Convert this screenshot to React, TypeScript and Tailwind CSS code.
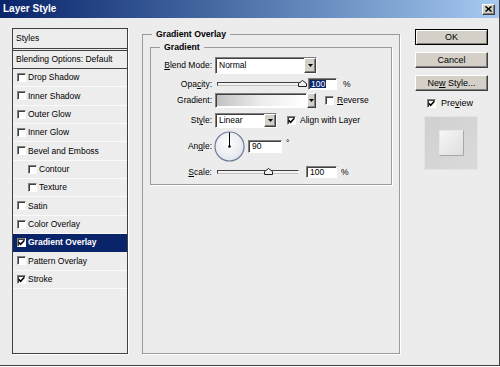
import React from 'react';

const sunken =
  'border border-t-[#808080] border-l-[#808080] border-r-white border-b-white bg-white shadow-[inset_1px_1px_0_#404040]';
const raised =
  'border border-t-white border-l-white border-r-[#404040] border-b-[#404040] bg-[#d4d0c8] shadow-[inset_-1px_-1px_0_#808080]';

function Check({ on, className = '' }: { on?: boolean; className?: string }) {
  return (
    <span className={`flex h-[9px] w-[9px] shrink-0 items-center justify-center ${sunken} ${className}`}>
      {on && (
        <svg width="7" height="7" viewBox="0 0 7 7">
          <path d="M0.6 3.2 L2.6 5.3 L6.4 1.2" fill="none" stroke="#000" strokeWidth="1.6" />
        </svg>
      )}
    </span>
  );
}

function Arrow({ className = '' }: { className?: string }) {
  return (
    <span className={`flex h-full shrink-0 items-center justify-center ${raised} ${className}`}>
      <svg width="5" height="3" viewBox="0 0 5 3">
        <path d="M0 0h5L2.5 3z" fill="#000" />
      </svg>
    </span>
  );
}

function Thumb({ className = '' }: { className?: string }) {
  return (
    <svg width="9" height="7" viewBox="0 0 9 7" className={`absolute top-[2px] ${className}`}>
      <path d="M0.5 6.5V3.5L4.5 0.5L8.5 3.5V6.5Z" fill="#f2f2f2" stroke="#202020" />
    </svg>
  );
}

function Btn({ children, primary, className = '' }: { children: React.ReactNode; primary?: boolean; className?: string }) {
  const edge = primary
    ? 'border border-black bg-[#d4d0c8] shadow-[inset_1px_1px_0_#fff,inset_-1px_-1px_0_#808080]'
    : raised;
  return (
    <div className={`flex h-[16px] w-[73px] items-center justify-center text-[9px] ${edge} ${className}`}>
      {children}
    </div>
  );
}

const styles: [string, boolean, boolean][] = [
  ['Drop Shadow', false, false],
  ['Inner Shadow', false, false],
  ['Outer Glow', false, false],
  ['Inner Glow', false, false],
  ['Bevel and Emboss', false, false],
  ['Contour', false, true],
  ['Texture', false, true],
  ['Satin', false, false],
  ['Color Overlay', false, false],
  ['Gradient Overlay', true, false],
  ['Pattern Overlay', false, false],
  ['Stroke', true, false],
];

function StyleList() {
  return (
    <div className="mt-[10px] flex h-[326px] w-[116px] shrink-0 flex-col border border-[#404040] bg-[#ededed] shadow-[1px_1px_0_#fff]">
      <div className="flex h-[20px] shrink-0 items-center border-b border-[#404040] pl-[3px]">Styles</div>
      <div className="h-[1px] shrink-0" />
      <div className="flex h-[19px] shrink-0 items-center border-y border-[#404040] pl-[3px]">
        Blending Options: Default
      </div>
      {styles.map(([name, on, indent]) => {
        const sel = name === 'Gradient Overlay';
        return (
          <div
            key={name}
            className={`flex h-[18.33px] shrink-0 items-center gap-[2px] border-b ${
              sel ? 'border-[#0a246a] bg-[#0a246a] font-bold text-white' : 'border-[#fafafa]'
            } ${indent ? 'pl-[15px]' : 'pl-[4px]'}`}
          >
            <Check on={on} />
            <span>{name}</span>
          </div>
        );
      })}
    </div>
  );
}

function Label({ children }: { children: React.ReactNode }) {
  return <span className="w-[61px] shrink-0 text-right">{children}</span>;
}

function Options() {
  return (
    <fieldset className="ml-[14px] mt-[11px] h-[325px] w-[258px] shrink-0 border border-[#9a9a9a] shadow-[1px_1px_0_#fff]">
      <legend className="ml-[9px] px-[4px] text-[8.7px] font-bold leading-[11px]">Gradient Overlay</legend>
      <fieldset className="ml-[7px] mt-[1px] w-[242px] border border-[#9a9a9a] pb-[6px] shadow-[1px_1px_0_#fff]">
        <legend className="ml-[9px] px-[4px] text-[8.7px] font-bold leading-[12px]">Gradient</legend>

        <div className="mt-[4px] flex h-[17px] items-center">
          <Label>
            <span className="underline">B</span>lend Mode:
          </Label>
          <div className={`ml-[3px] flex h-full w-[102px] items-center ${sunken}`}>
            <span className="flex-1 pl-[3px]">Normal</span>
            <Arrow className="w-[12px]" />
          </div>
        </div>

        <div className="mt-[4px] flex h-[12px] items-center">
          <Label>
            Opa<span className="underline">c</span>ity:
          </Label>
          <div className="relative ml-[5px] flex h-full w-[86px] items-center">
            <div className="h-[4px] w-full border border-t-[#404040] border-l-[#404040] border-r-white border-b-[#c0c0c0] bg-[#f4f4f4]" />
            <Thumb className="left-[81px]" />
          </div>
          <div className={`ml-[5px] flex h-full w-[29px] items-center pl-[1px] ${sunken}`}>
            <span className="bg-[#0a246a] px-[1px] text-white">100</span>
          </div>
          <span className="ml-[6px]">%</span>
        </div>

        <div className="mt-[3px] flex h-[15px] items-center">
          <Label>Gradient:</Label>
          <div className={`ml-[3px] h-full w-[92px] p-[1px] ${sunken}`}>
            <div className="h-full w-full bg-linear-to-r from-[#c2c2c2] via-[#ececec] to-white" />
          </div>
          <Arrow className="w-[9px]" />
          <Check className="ml-[9px]" />
          <span className="ml-[3px]">
            <span className="underline">R</span>everse
          </span>
        </div>

        <div className="mt-[5px] flex h-[15px] items-center">
          <Label>
            St<span className="underline">y</span>le:
          </Label>
          <div className={`ml-[3px] flex h-full w-[62px] items-center ${sunken}`}>
            <span className="flex-1 pl-[3px]">Linear</span>
            <Arrow className="w-[12px]" />
          </div>
          <Check on className="ml-[10px]" />
          <span className="ml-[4px]">Align with Layer</span>
        </div>

        <div className="mt-[3px] flex h-[31px] items-center">
          <Label>
            An<span className="underline">g</span>le:
          </Label>
          <svg width="31" height="31" viewBox="0 0 31 31" className="ml-[2px] shrink-0">
            <defs>
              <radialGradient id="dial" cx="0.45" cy="0.4" r="0.6">
                <stop offset="0" stopColor="#ffffff" />
                <stop offset="1" stopColor="#e2e6ee" />
              </radialGradient>
            </defs>
            <circle cx="15.5" cy="15.5" r="14.5" fill="url(#dial)" stroke="#6f7c96" strokeWidth="1.2" />
            <line x1="15.5" y1="15.5" x2="15.5" y2="1.5" stroke="#000" strokeWidth="1" />
            <circle cx="15.5" cy="15.5" r="1.3" fill="#000" />
          </svg>
          <div className={`ml-[3px] flex h-[13px] w-[34px] items-center pl-[3px] ${sunken}`}>90</div>
          <span className="ml-[4px] self-start mt-[8px]">°</span>
        </div>

        <div className="mt-[4px] flex h-[12px] items-center">
          <Label>
            <span className="underline">S</span>cale:
          </Label>
          <div className="relative ml-[5px] flex h-full w-[82px] items-center">
            <div className="h-[4px] w-full border border-t-[#404040] border-l-[#404040] border-r-white border-b-[#c0c0c0] bg-[#f4f4f4]" />
            <Thumb className="left-[47px]" />
          </div>
          <div className={`ml-[7px] flex h-full w-[31px] items-center pl-[3px] ${sunken}`}>100</div>
          <span className="ml-[4px]">%</span>
        </div>
      </fieldset>
    </fieldset>
  );
}

function Actions() {
  return (
    <div className="ml-[15px] mt-[11px] flex w-[73px] shrink-0 flex-col">
      <Btn primary>OK</Btn>
      <Btn className="mt-[7px]">Cancel</Btn>
      <Btn className="mt-[7px]">
        <span>
          Ne<span className="underline">w</span> Style...
        </span>
      </Btn>
      <div className="ml-[12px] mt-[7px] flex h-[10px] items-center gap-[5px] text-[9px]">
        <Check on />
        <span>
          Pre<span className="underline">v</span>iew
        </span>
      </div>
      <div className="ml-[9px] mt-[8px] flex h-[54px] w-[54px] items-center justify-center border border-[#e4e4e4] bg-linear-to-br from-[#d0d0d0] to-[#dadada]">
        <div className="h-[26px] w-[25px] border border-t-[#e8e8e8] border-l-[#e8e8e8] border-r-[#a8a8a8] border-b-[#a8a8a8] bg-linear-to-br from-[#f6f6f6] to-[#dedede]" />
      </div>
    </div>
  );
}

export default function App() {
  return (
    <div className="h-[366px] w-[500px] border-b border-r border-[#404040] bg-[#ececec] font-['Liberation_Sans',Arial,sans-serif] text-[8.5px] leading-none text-black">
      <div className="flex h-[18px] items-center justify-between bg-linear-to-r from-[#0a246a] to-[#a6caf0] pl-[3px] pr-[4px]">
        <span className="text-[10px] font-bold text-white">Layer Style</span>
        <span className={`flex h-[11px] w-[13px] items-center justify-center ${raised}`}>
          <svg width="7" height="6" viewBox="0 0 7 6">
            <path d="M0.5 0.5L6.5 5.5M6.5 0.5L0.5 5.5" stroke="#000" strokeWidth="1.5" />
          </svg>
        </span>
      </div>
      <div className="flex pl-[12px]">
        <StyleList />
        <Options />
        <Actions />
      </div>
    </div>
  );
}
